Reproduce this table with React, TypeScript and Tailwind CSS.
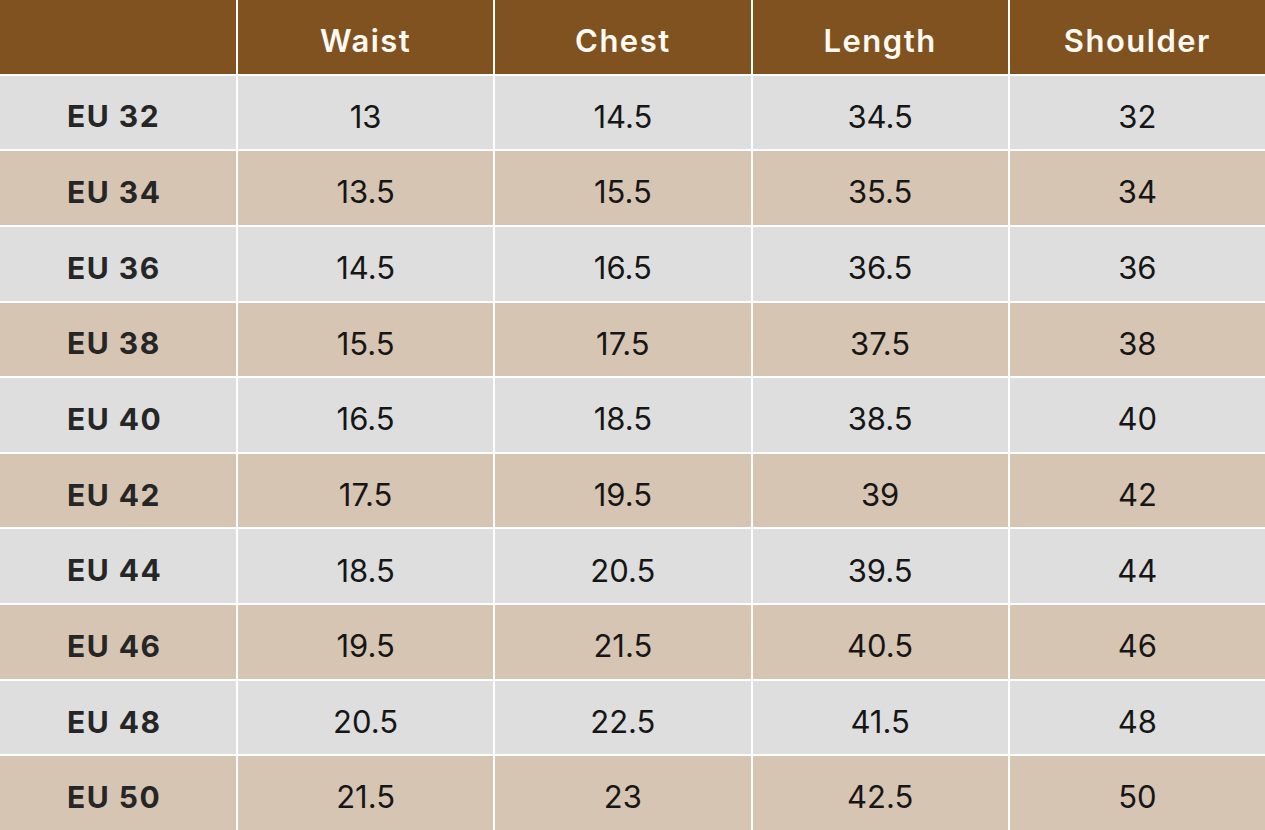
const headers = ["", "Waist", "Chest", "Length", "Shoulder"];

const rows = [
  ["EU 32", "13", "14.5", "34.5", "32"],
  ["EU 34", "13.5", "15.5", "35.5", "34"],
  ["EU 36", "14.5", "16.5", "36.5", "36"],
  ["EU 38", "15.5", "17.5", "37.5", "38"],
  ["EU 40", "16.5", "18.5", "38.5", "40"],
  ["EU 42", "17.5", "19.5", "39", "42"],
  ["EU 44", "18.5", "20.5", "39.5", "44"],
  ["EU 46", "19.5", "21.5", "40.5", "46"],
  ["EU 48", "20.5", "22.5", "41.5", "48"],
  ["EU 50", "21.5", "23", "42.5", "50"],
];

export default function App() {
  return (
    <div className="w-[1265px] h-[830px] bg-white font-['Inter',sans-serif]">
      <div className="grid h-full grid-cols-[236px_1fr_1fr_1fr_1fr] grid-rows-11 gap-[2px]">
        {headers.map((h, i) => (
          <div
            key={"h" + i}
            className="flex items-center justify-center bg-[#80521f] pt-[9px] text-[31px] font-semibold tracking-[1.5px] text-[#fffaf3]"
          >
            {h}
          </div>
        ))}
        {rows.map((row, r) =>
          row.map((cell, c) => (
            <div
              key={r + "-" + c}
              className={
                (r % 2 === 0 ? "bg-[#dedede] " : "bg-[#d7c5b3] ") +
                (c === 0
                  ? "flex items-center pl-[67px] pt-[9px] text-[30px] font-bold tracking-[1.5px] text-[#262626]"
                  : "flex items-center justify-center pt-[9px] text-[31px] font-normal text-[#161616]")
              }
            >
              {cell}
            </div>
          ))
        )}
      </div>
    </div>
  );
}
